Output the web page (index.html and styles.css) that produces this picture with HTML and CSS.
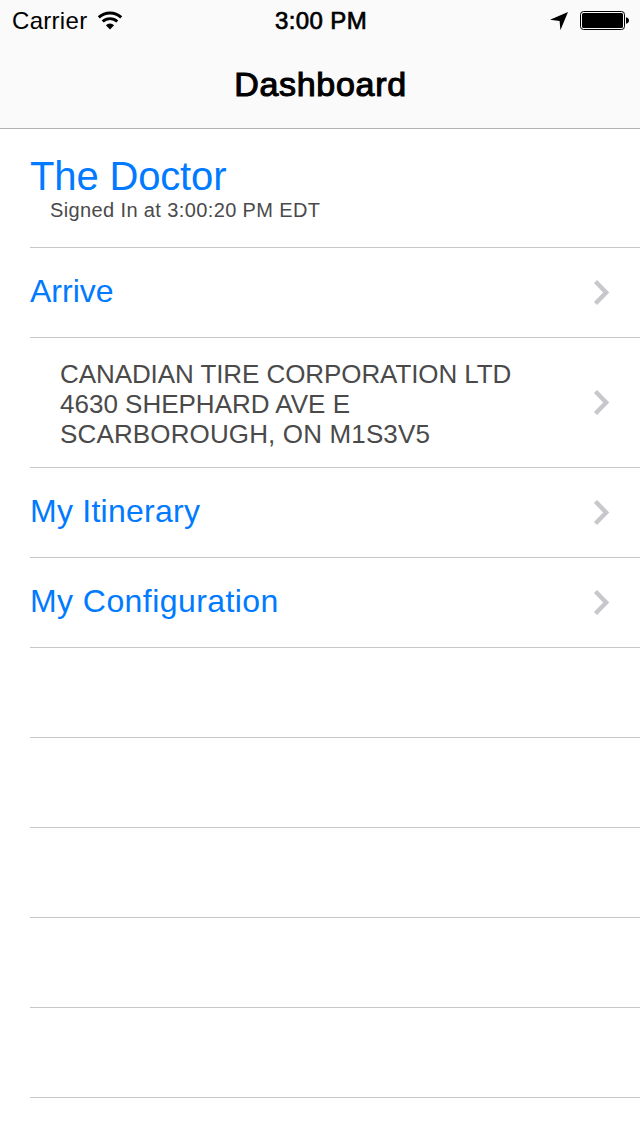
FILE: index.html
```html
<!DOCTYPE html>
<html lang="en">
<head>
    <meta charset="UTF-8">
    <meta name="viewport" content="width=device-width, initial-scale=1.0">
    <title>Dashboard</title>
    <link rel="stylesheet" href="styles.css">
</head>
<body>
    <header class="header">
        <div class="status-bar">
            <div class="status-left">
                <span class="carrier">Carrier</span>
                <svg class="wifi" width="26" height="20" viewBox="0 0 26 20">
                    <path d="M1.8 6.3A16.5 16.5 0 0 1 24.2 6.3" fill="none" stroke="#000" stroke-width="3"/>
                    <path d="M5.7 10.6A10.6 10.6 0 0 1 20.3 10.6" fill="none" stroke="#000" stroke-width="2.8"/>
                    <path d="M8.9 14.2A6 6 0 0 1 17.1 14.2L13 18.6Z"/>
                </svg>
            </div>
            <div class="time">3:00 PM</div>
            <div class="status-right">
                <svg class="location" width="20" height="20" viewBox="0 0 20 20">
                    <path d="M19 1L11.4 19.2L10.6 10L1 8.8Z"/>
                </svg>
                <svg class="battery" width="50" height="20" viewBox="0 0 50 20">
                    <rect x="0.5" y="0.5" width="44" height="18" rx="3" fill="none" stroke="#000"/>
                    <rect x="2" y="2" width="41" height="15" rx="1.5"/>
                    <path d="M46 6.2Q49 7 49 9.5T46 12.8Z"/>
                </svg>
            </div>
        </div>
        <h1 class="title">Dashboard</h1>
    </header>

    <ul class="menu">
        <li class="row profile">
            <div class="name">The Doctor</div>
            <div class="signed-in">Signed In at 3:00:20 PM EDT</div>
        </li>
        <li class="row">
            <span class="label">Arrive</span>
            <svg class="chevron" width="18" height="28" viewBox="0 0 18 28"><path d="M2.5 2.5L13.2 13.5L2.5 24.5"/></svg>
        </li>
        <li class="row address-row">
            <div class="address">
                <div class="company">CANADIAN TIRE CORPORATION LTD</div>
                <div class="street">4630 SHEPHARD AVE E</div>
                <div class="city">SCARBOROUGH, ON M1S3V5</div>
            </div>
            <svg class="chevron" width="18" height="28" viewBox="0 0 18 28"><path d="M2.5 2.5L13.2 13.5L2.5 24.5"/></svg>
        </li>
        <li class="row">
            <span class="label itinerary">My Itinerary</span>
            <svg class="chevron" width="18" height="28" viewBox="0 0 18 28"><path d="M2.5 2.5L13.2 13.5L2.5 24.5"/></svg>
        </li>
        <li class="row">
            <span class="label configuration">My Configuration</span>
            <svg class="chevron" width="18" height="28" viewBox="0 0 18 28"><path d="M2.5 2.5L13.2 13.5L2.5 24.5"/></svg>
        </li>
        <li class="row"></li>
        <li class="row"></li>
        <li class="row"></li>
        <li class="row"></li>
        <li class="row"></li>
    </ul>
</body>
</html>
```
FILE: styles.css
```css
* {
    box-sizing: border-box;
}

body {
    margin: 0;
    height: 1136px;
    overflow: hidden;
    font-family: "Liberation Sans", Arial, sans-serif;
    background-color: #fff;
    color: #000;
}

.header {
    height: 129px;
    background-color: #fafafa;
    border-bottom: 1px solid #b2b2b2;
}

.status-bar {
    display: grid;
    grid-template-columns: 1fr auto 1fr;
    align-items: center;
    height: 40px;
    padding: 2px 10px 0 12px;
    font-size: 24px;
    line-height: 38px;
}

.status-left, .status-right {
    display: flex;
    align-items: center;
}

.status-right {
    justify-content: flex-end;
    gap: 11px;
}

.carrier {
    letter-spacing: 0.3px;
}

.wifi {
    margin-left: 10px;
}

.time {
    letter-spacing: 0.4px;
    -webkit-text-stroke: 0.7px #000;
}

.title {
    margin: 0;
    font-size: 34px;
    font-weight: normal;
    line-height: 88px;
    letter-spacing: 0.7px;
    text-align: center;
    text-indent: 1px;
    -webkit-text-stroke: 1.1px #000;
}

.menu {
    list-style: none;
    margin: 0;
    padding: 0 0 0 30px;
}

.row {
    display: flex;
    align-items: center;
    justify-content: space-between;
    height: 90px;
    padding-right: 29px;
    border-bottom: 1px solid #c8c7cc;
}

.profile {
    display: block;
    height: 119px;
    padding-top: 24px;
}

.name {
    font-size: 40px;
    line-height: 46px;
    letter-spacing: -0.15px;
    color: #007aff;
}

.signed-in {
    margin-left: 20px;
    font-size: 20px;
    line-height: 22px;
    letter-spacing: 0.38px;
    color: #4a4a4a;
}

.label {
    padding-bottom: 3px;
    font-size: 32px;
    color: #007aff;
}

.itinerary {
    letter-spacing: 0.25px;
}

.configuration {
    letter-spacing: 0.43px;
}

.address-row {
    height: 130px;
}

.address {
    margin-left: 30px;
    padding-top: 3px;
    font-size: 26px;
    line-height: 30px;
    color: #4a4a4a;
}

.company {
    letter-spacing: -0.08px;
}

.city {
    letter-spacing: 0.14px;
}

.chevron {
    fill: none;
    stroke: #c7c7cc;
    stroke-width: 4.4;
}
```
